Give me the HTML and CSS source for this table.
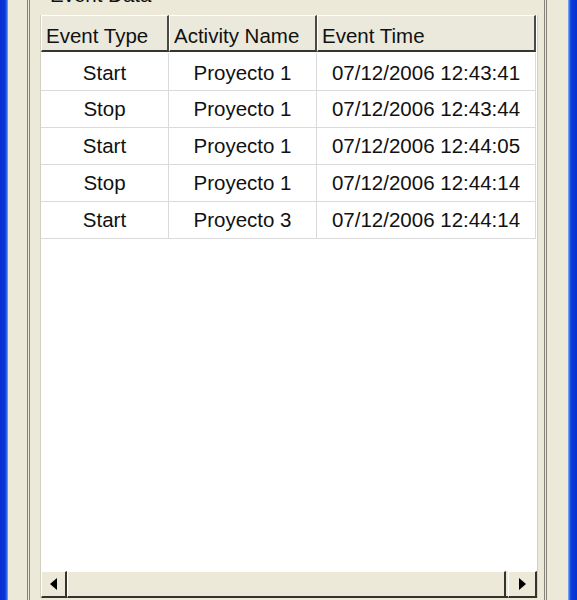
FILE: index.html
```html
<!DOCTYPE html>
<html lang="en">
<head>
    <meta charset="UTF-8">
    <meta name="viewport" content="width=device-width, initial-scale=1.0">
    <title>Event Data</title>
    <link rel="stylesheet" href="styles.css">
</head>
<body>

<div class="frame-left"></div>
<div class="client">
    <div class="groupbox">
        <div class="group-label">Event Data</div>
        <div class="listview">
            <table class="events">
                <colgroup>
                    <col class="col-type">
                    <col class="col-name">
                    <col class="col-time">
                </colgroup>
                <thead>
                <tr>
                    <th>Event Type</th>
                    <th>Activity Name</th>
                    <th>Event Time</th>
                </tr>
                </thead>
                <tbody>
                <tr><td>Start</td><td>Proyecto 1</td><td>07/12/2006 12:43:41</td></tr>
                <tr><td>Stop</td><td>Proyecto 1</td><td>07/12/2006 12:43:44</td></tr>
                <tr><td>Start</td><td>Proyecto 1</td><td>07/12/2006 12:44:05</td></tr>
                <tr><td>Stop</td><td>Proyecto 1</td><td>07/12/2006 12:44:14</td></tr>
                <tr><td>Start</td><td>Proyecto 3</td><td>07/12/2006 12:44:14</td></tr>
                </tbody>
            </table>
            <div class="fill"></div>
            <div class="hscroll">
                <div class="sb-button sb-left">
                    <svg width="7" height="12" viewBox="0 0 7 12"><polygon points="7,0 0,6 7,12" fill="#000"/></svg>
                </div>
                <div class="sb-thumb"></div>
                <div class="sb-gap"></div>
                <div class="sb-button sb-right">
                    <svg width="7" height="12" viewBox="0 0 7 12"><polygon points="0,0 7,6 0,12" fill="#000"/></svg>
                </div>
            </div>
        </div>
    </div>
</div>
<div class="frame-right"></div>

</body>
</html>
```

FILE: styles.css
```css
body {
    margin: 0;
    height: 600px;
    overflow: hidden;
    display: flex;
    font-family: "Liberation Sans", Arial, sans-serif;
    font-size: 20.5px;
    color: #111;
}
.frame-left {
    width: 8px;
    background: linear-gradient(to right, #0a2ed0 0, #0a34dc 5px, #3a74ee 7px, #8fb0ee 8px);
}
.frame-right {
    width: 9px;
    background: linear-gradient(to right, #9cb8ee 0, #4a82f0 1px, #0b3ddc 3px, #0831d0 9px);
}
.client {
    flex: 1;
    background-color: #ece9d8;
    padding: 0 21px 0 19px;
}
.groupbox {
    height: 100%;
    border-left: 3px double #858377;
    border-right: 3px double #858377;
    padding: 0 6px 0 10px;
    display: flex;
    flex-direction: column;
}
.group-label {
    line-height: 22px;
    margin-top: -16px;
    padding-left: 10px;
}
.listview {
    margin-top: 9px;
    height: 583px;
    background-color: #fff;
    border-left: 1px solid #d3d0c1;
    border-right: 1px solid #d3d0c1;
    display: flex;
    flex-direction: column;
}
.events {
    width: 495px;
    table-layout: fixed;
    border-collapse: separate;
    border-spacing: 0;
}
.col-type {
    width: 128px;
}
.col-name {
    width: 148px;
}
.col-time {
    width: 219px;
}
.events th {
    height: 37px;
    box-sizing: border-box;
    padding: 9px 0 0 4px;
    line-height: 22px;
    vertical-align: top;
    text-align: left;
    font-weight: normal;
    white-space: nowrap;
    background-color: #ebe9dc;
    border-top: 1px solid #fff;
    border-left: 1px solid #fff;
    border-right: 2px solid #4a4943;
    border-bottom: 2px solid #36352f;
}
.events td {
    height: 37px;
    box-sizing: border-box;
    padding: 0;
    line-height: 22px;
    text-align: center;
    white-space: nowrap;
    border-right: 1px solid #dadada;
    border-bottom: 1px solid #dadada;
}
.events tbody tr:first-child td {
    height: 39px;
    padding-top: 1px;
    border-top: 2px solid #fff;
}
.fill {
    flex: 1;
}
.hscroll {
    height: 27px;
    display: flex;
    background-color: #ece9d8;
}
.sb-button, .sb-thumb {
    box-sizing: border-box;
    background-color: #ece9d8;
    border-top: 1px solid #fff;
    border-left: 1px solid #fff;
    border-right: 2px solid #34332e;
    border-bottom: 2px solid #34332e;
    display: flex;
    align-items: center;
    justify-content: center;
}
.sb-left {
    width: 26px;
}
.sb-right {
    width: 29px;
}
.sb-thumb {
    flex: 1;
}
.sb-gap {
    width: 2px;
    border-bottom: 2px solid #34332e;
}
```
